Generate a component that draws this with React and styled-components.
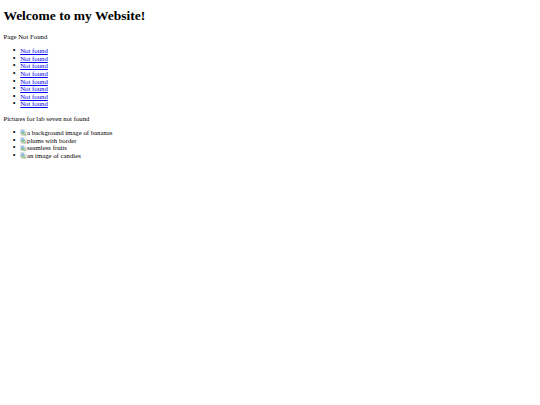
import styled, { createGlobalStyle } from 'styled-components'

// the page is a 1280px-wide layout shrunk to 540px, so every size is scaled
const s = 0.421875
const px = (v) => `${(v * s).toFixed(3)}px`

const GlobalStyle = createGlobalStyle`
  body {
    margin: ${px(8)};
    background: #ffffff;
    color: #000000;
    font-family: "Liberation Serif", "Times New Roman", serif;
    font-size: ${px(16)};
    line-height: ${px(18)};
  }
`

const Title = styled.h1`
  font-size: ${px(32)};
  line-height: ${px(36.8)};
  font-weight: bold;
  margin: 5px 0 ${px(21.44)};
`

const Para = styled.p`
  margin: ${px(16)} 0;
`

const List = styled.ul`
  margin: ${px(16)} 0;
  padding-left: ${px(40)};
  list-style: none;
`

const Item = styled.li`
  line-height: ${(p) => px(p.$tall ? 18.2 : 18)};

  &::before {
    content: "•";
    display: inline-block;
    width: 7px;
    margin-left: -9.5px;
    margin-right: 2.5px;
    text-align: center;
    font-size: 8px;
    color: #000;
  }
`

const Link = styled.a`
  color: #0000ee;
  text-decoration: underline;
`

const Icon = styled.svg`
  width: ${px(16)};
  height: ${px(16)};
  vertical-align: ${px(-2)};
`

const BrokenIcon = () => (
  <Icon viewBox="0 0 16 16">
    <path d="M1.5 1.5h9l4 4v3l-3 2-2-2-3 3-2-1-3 2z" fill="#ffffff" stroke="#a0a0a0" />
    <path d="M2.5 3h7v3h3v2l-1.5 1-2-2-3 3-2-1-1.5 1z" fill="#8cbef0" />
    <path d="M2.5 10l2-1.5 2 1 3-3 2 2V9l-9 3z" fill="#5fb04a" />
    <path d="M3 15.5h11.5v-5l-3 2-2-2-3 3-2-1z" fill="#ffffff" stroke="#a0a0a0" />
    <path d="M4 14.5h9.5v-2.5l-2 1.2-2-1.8-3 3z" fill="#6abf4b" />
  </Icon>
)

const pictures = [
  'a background image of bananas',
  'plums with border',
  'seamless fruits',
  'an image of candies',
]

export default function App() {
  return (
    <>
      <GlobalStyle />
      <Title>Welcome to my Website!</Title>
      <Para>Page Not Found</Para>
      <List>
        {Array.from({ length: 8 }).map((_, i) => (
          <Item key={i}>
            <Link href="#">Not found</Link>
          </Item>
        ))}
      </List>
      <Para>Pictures for lab seven not found</Para>
      <List>
        {pictures.map((p) => (
          <Item key={p} $tall>
            <BrokenIcon />
            {p}
          </Item>
        ))}
      </List>
    </>
  )
}
